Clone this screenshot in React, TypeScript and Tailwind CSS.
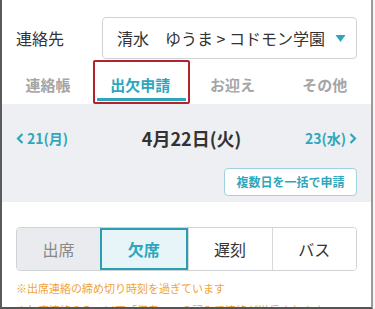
import React from "react"

const font = { fontFamily: '"Noto Sans CJK JP", "Noto Sans", sans-serif' }

const tabs = ["連絡帳", "出欠申請", "お迎え", "その他"]
const segments = ["出席", "欠席", "遅刻", "バス"]

const App = () => {
  const active = 1
  const selected = 1
  return (
    <div className="w-[375px] h-[309px] overflow-hidden bg-[#f4f4f4]" style={font}>
      <div className="w-[373px] h-[309px] bg-white border-l-2 border-r-2 border-b-2 border-l-[#5a5a5a] border-r-[#9a9a9a] border-b-[#555] flex flex-col overflow-hidden">
        {/* contact row */}
        <div className="shrink-0 flex items-center pt-[16px] pl-[14px] pr-[14px] h-[60px]">
          <div className="w-[86px] text-[16px] text-[#333]">連絡先</div>
          <div className="flex-1 h-[42px] border border-[#cfd3d6] rounded-[4px] flex items-center pl-[14px] pr-[10px]">
            <span className="flex-1 text-[16px] text-[#333] whitespace-nowrap">清水　ゆうま &gt; コドモン学園</span>
            <svg width="11" height="9" viewBox="0 0 11 9">
              <path d="M0.5 1 L10.5 1 L5.5 8 Z" fill="#2ea7bd" />
            </svg>
          </div>
        </div>

        {/* tabs */}
        <div className="shrink-0 flex h-[44px]">
          {tabs.map((t, i) => (
            <div key={t} className="relative flex-1 flex items-center justify-center">
              <span
                className={
                  i === active
                    ? "text-[15px] font-bold text-[#2ea7bd] pt-[6px]"
                    : "text-[15px] font-bold text-[#a5a5a5] pt-[6px]"
                }
              >
                {t}
              </span>
              {i === active && (
                <>
                  <div className="absolute left-[3px] right-[1px] bottom-[3px] h-[3px] bg-[#2ea7bd]" />
                  <div className="absolute left-[-1px] right-[-3px] top-0 bottom-0 border-[2.5px] border-[#b3232b] rounded-[2px]" />
                </>
              )}
            </div>
          ))}
        </div>

        {/* date area */}
        <div className="shrink-0 bg-[#eeeff3] h-[98px] flex flex-col px-[14px]">
          <div className="flex items-center justify-between h-[64px] pt-[4px]">
            <div className="flex items-center gap-[3px] text-[#2ea7bd] font-bold text-[14px]">
              <svg width="8" height="11" viewBox="0 0 8 11">
                <path d="M6.5 1 L2 5.5 L6.5 10" stroke="#2ea7bd" strokeWidth="2.2" fill="none" />
              </svg>
              <span>21(月)</span>
            </div>
            <div className="text-[18px] font-bold text-[#333] pl-[10px]">4月22日(火)</div>
            <div className="flex items-center gap-[3px] text-[#2ea7bd] font-bold text-[14px]">
              <span>23(水)</span>
              <svg width="8" height="11" viewBox="0 0 8 11">
                <path d="M1.5 1 L6 5.5 L1.5 10" stroke="#2ea7bd" strokeWidth="2.2" fill="none" />
              </svg>
            </div>
          </div>
          <div className="flex justify-end">
            <div className="h-[28px] w-[133px] bg-white border border-[#9fd2dc] rounded-[4px] flex items-center justify-center text-[12px] font-bold text-[#2ea7bd]">
              複数日を一括で申請
            </div>
          </div>
        </div>

        {/* attendance */}
        <div className="shrink-0 px-[14px] pt-[25px]">
          <div className="flex h-[44px] border border-[#cfd3d6] rounded-[4px] overflow-hidden">
            {segments.map((s, i) => (
              <div
                key={s}
                className={
                  i === selected
                    ? "flex-1 flex items-center justify-center bg-[#e8f5f8] border-2 border-[#2a9fb3] text-[16px] font-bold text-[#2ea7bd]"
                    : i === 0
                    ? "flex-1 flex items-center justify-center bg-[#e9ebee] text-[16px] text-[#888]"
                    : "flex-1 flex items-center justify-center bg-white border-l border-[#d6d9dc] text-[16px] text-[#333]"
                }
              >
                {s}
              </div>
            ))}
          </div>
          <div className="mt-[9px] text-[11px] leading-[16px] text-[#f0a33a]">※出席連絡の締め切り時刻を過ぎています</div>
          <div className="mt-[6px] text-[11px] leading-[16px] text-[#f0a33a] whitespace-nowrap">※欠席連絡のみ、以下「備考」への記入で連絡が送信されます</div>
        </div>
      </div>
    </div>
  )
}

export default App
